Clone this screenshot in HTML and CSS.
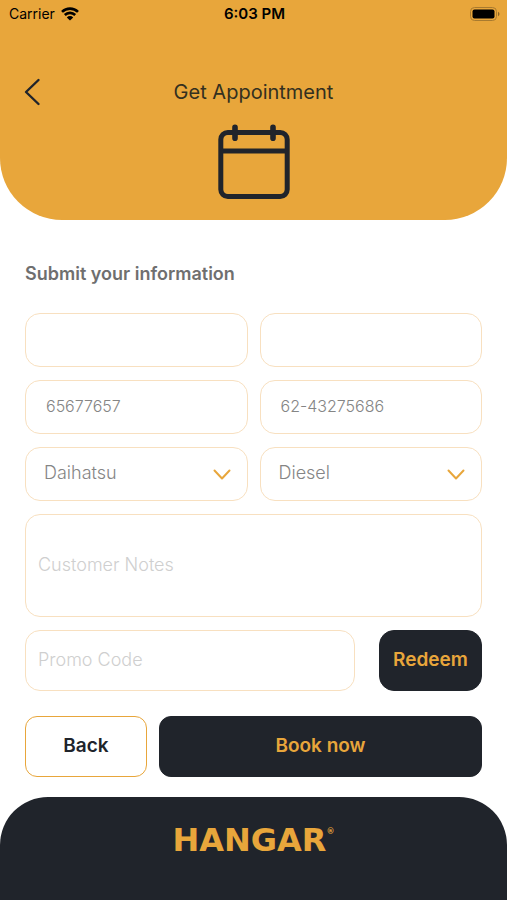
FILE: index.html
```html
<!DOCTYPE html>
<html lang="en">
<head>
    <meta charset="UTF-8">
    <meta name="viewport" content="width=device-width, initial-scale=1.0">
    <title>Get Appointment</title>
    <link rel="stylesheet" href="styles.css">
</head>
<body>
    <header class="header">
        <div class="status-bar">
            <div class="carrier">
                <span>Carrier</span>
                <svg width="18" height="14" viewBox="0 0 18 14" fill="none" stroke="#000" stroke-width="2.6">
                    <path d="M1 4.9a11.4 11.4 0 0 1 16 0"/>
                    <path d="M3.8 8a7.4 7.4 0 0 1 10.4 0"/>
                    <path d="M9 13.6 5.8 10.4a4.5 4.5 0 0 1 6.4 0z" fill="#000" stroke="none"/>
                </svg>
            </div>
            <span class="time">6:03 PM</span>
            <svg class="battery" width="30" height="14" viewBox="0 0 30 14">
                <rect x="0.5" y="0.5" width="26" height="13" rx="4" fill="none" stroke="#a87a2f"/>
                <rect x="2.5" y="2.5" width="22" height="9" rx="2" fill="#000"/>
                <path d="M28 4.8c2 .8 2 3.6 0 4.4z" fill="#8a6424"/>
            </svg>
        </div>

        <div class="title-bar">
            <button type="button" class="back-arrow" aria-label="Go back">
                <svg width="17" height="28" viewBox="0 0 17 28" fill="none" stroke="#20242b" stroke-width="2.4" stroke-linecap="round" stroke-linejoin="round">
                    <path d="M14.5 2 2 14l12.5 12"/>
                </svg>
            </button>
            <h1 class="title">Get Appointment</h1>
        </div>

        <svg class="calendar" width="72" height="76" viewBox="0 0 72 76" fill="none" stroke="#20242b" stroke-width="5" stroke-linecap="round">
            <rect x="2.8" y="8.5" width="66.4" height="64" rx="7"/>
            <path d="M3 27h66" stroke-linecap="butt"/>
            <path d="M17 3.2v11M55 3.2v11" stroke-width="5.6"/>
        </svg>
    </header>

    <main class="content">
        <h2 class="subtitle">Submit your information</h2>

        <form class="form">
            <div class="row">
                <input type="text" class="field" aria-label="First name">
                <input type="text" class="field" aria-label="Last name">
            </div>
            <div class="row">
                <input type="text" class="field number" aria-label="Phone number" value="65677657">
                <input type="text" class="field number" aria-label="Plate number" value="62-43275686">
            </div>
            <div class="row">
                <div class="select-box">
                    <select class="field" aria-label="Car brand">
                        <option>Daihatsu</option>
                    </select>
                    <svg class="chevron" width="18" height="12" viewBox="0 0 18 12">
                        <path d="M1.5 1.5 9 9.5l7.5-8"/>
                    </svg>
                </div>
                <div class="select-box">
                    <select class="field" aria-label="Fuel type">
                        <option>Diesel</option>
                    </select>
                    <svg class="chevron" width="18" height="12" viewBox="0 0 18 12">
                        <path d="M1.5 1.5 9 9.5l7.5-8"/>
                    </svg>
                </div>
            </div>

            <textarea class="field notes" aria-label="Customer Notes" placeholder="Customer Notes"></textarea>

            <div class="promo-row">
                <input type="text" class="field promo" aria-label="Promo Code" placeholder="Promo Code">
                <button type="button" class="btn btn-dark redeem">Redeem</button>
            </div>

            <div class="actions">
                <button type="button" class="btn btn-light">Back</button>
                <button type="submit" class="btn btn-dark">Book now</button>
            </div>
        </form>
    </main>

    <footer class="footer">
        <div class="logo">HANGAR<sup>®</sup></div>
    </footer>
</body>
</html>
```
FILE: styles.css
```css
* {
    box-sizing: border-box;
}

body {
    margin: 0;
    min-height: 100vh;
    display: flex;
    flex-direction: column;
    font-family: Inter, "Liberation Sans", sans-serif;
    background-color: #fff;
    color: #20242b;
}

/* Header */
.header {
    display: flex;
    flex-direction: column;
    padding-bottom: 20px;
    background-color: #e8a63b;
    border-radius: 0 0 62px 62px;
}

.status-bar {
    display: grid;
    grid-template-columns: 1fr auto 1fr;
    align-items: center;
    height: 27px;
    padding: 0 7px 0 9px;
    color: #000;
    font-size: 14px;
}

.carrier {
    display: flex;
    align-items: center;
    gap: 6px;
}

.time {
    font-size: 15px;
    font-weight: 600;
}

.battery {
    justify-self: end;
}

.title-bar {
    display: grid;
    grid-template-columns: 40px 1fr 40px;
    align-items: center;
    margin-top: 49px;
    padding: 0 12px;
}

.back-arrow {
    display: flex;
    justify-content: center;
    padding: 2px 0;
    border: none;
    background: none;
    cursor: pointer;
}

.title {
    margin: 0;
    text-align: center;
    font-size: 20px;
    font-weight: 400;
    color: #33301f;
}

.calendar {
    align-self: center;
    margin-top: 16px;
}

/* Form */
.content {
    padding: 42px 25px 20px;
}

.subtitle {
    margin: 0 0 27px;
    font-size: 18px;
    line-height: 24px;
    font-weight: 600;
    color: #6f6f6f;
}

.form {
    display: flex;
    flex-direction: column;
    gap: 13px;
}

.row {
    display: grid;
    grid-template-columns: 1fr 1fr;
    gap: 12px;
}

.field {
    display: block;
    width: 100%;
    height: 54px;
    padding: 0 18px 3px;
    border: 1px solid #f8e0c0;
    border-radius: 15px;
    background-color: #fff;
    color: #858585;
    font-family: inherit;
    font-size: 18px;
    font-weight: 300;
    appearance: none;
}

.field::placeholder {
    color: #cfcfcf;
    opacity: 1;
}

.number {
    padding: 0 20px 3px;
    font-size: 16px;
}

.select-box {
    position: relative;
}

.chevron {
    position: absolute;
    top: 22px;
    right: 17px;
    fill: none;
    stroke: #e8a63b;
    stroke-width: 2;
    stroke-linecap: round;
    stroke-linejoin: round;
    pointer-events: none;
}

.notes {
    height: 103px;
    padding: 38px 12px;
    line-height: 24px;
    resize: none;
}

.promo-row {
    display: grid;
    grid-template-columns: 1fr 103px;
    gap: 24px;
}

.promo {
    height: 61px;
    padding: 0 12px 3px;
}

/* Buttons */
.btn {
    height: 61px;
    padding: 0 0 3px;
    border: 1px solid #20242b;
    border-radius: 12px;
    font-family: inherit;
    font-size: 19px;
    font-weight: 600;
    cursor: pointer;
}

.btn-dark {
    background-color: #20242b;
    color: #e8a63b;
}

.btn-light {
    background-color: #fff;
    border-color: #e8a63b;
    color: #20242b;
}

.redeem {
    border-radius: 15px;
}

.actions {
    display: grid;
    grid-template-columns: 122px 1fr;
    gap: 12px;
    margin-top: 12px;
}

/* Footer */
.footer {
    flex: 1;
    min-height: 104px;
    padding-top: 27px;
    background-color: #20242b;
    border-radius: 48px 48px 0 0;
    text-align: center;
}

.logo {
    font-family: "DejaVu Sans", sans-serif;
    font-size: 32px;
    line-height: 32px;
    font-weight: 700;
    color: #e8a63b;
}

.logo sup {
    font-size: 8px;
    line-height: 16px;
    vertical-align: top;
}
```
